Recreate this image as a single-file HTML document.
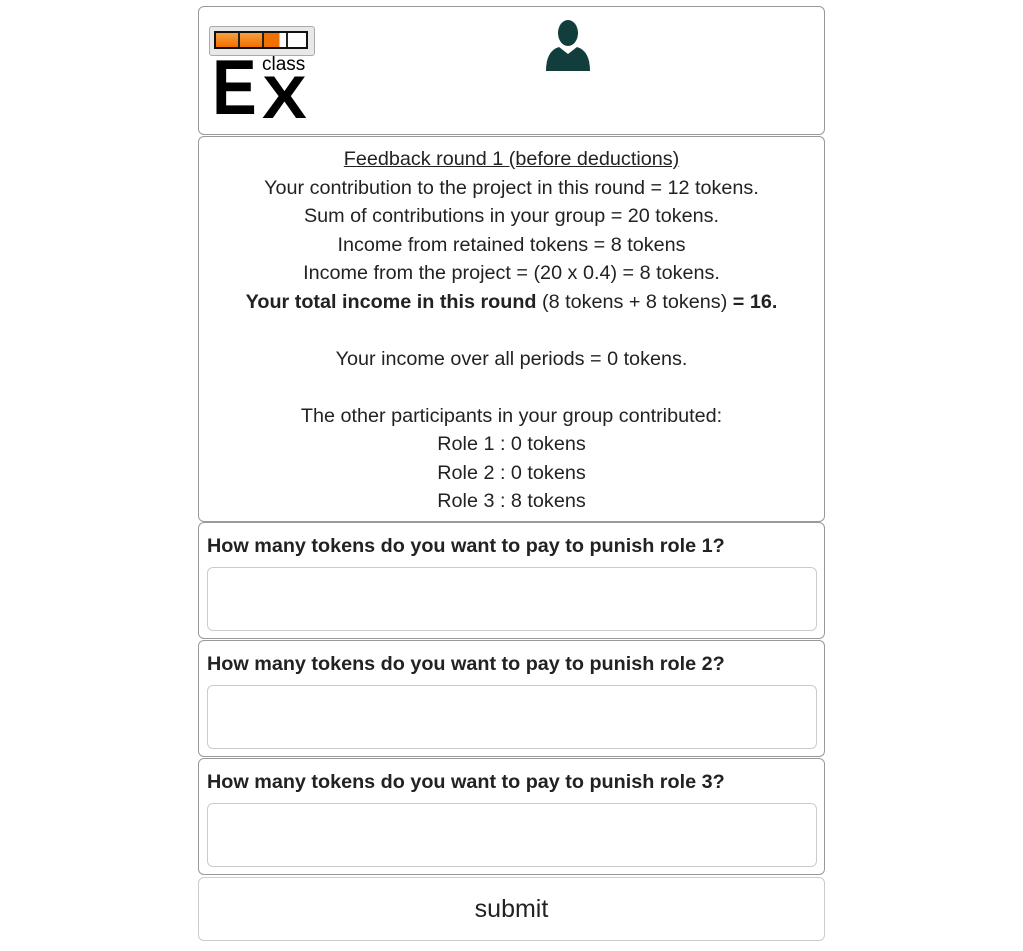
<!DOCTYPE html>
<html><head><style>
body{margin:0;background:#fff;font-family:"Liberation Sans",Arial,sans-serif;color:#222;}
.box{position:absolute;left:198px;width:625px;border:1px solid #999;border-radius:6px;background:#fff;box-sizing:content-box}
.fb{text-align:center;font-size:19.8px;line-height:28.5px;}
.q{font-weight:bold;font-size:19.8px;padding:12px 0 0 8px;line-height:22px}
.in{position:absolute;left:8px;width:608px;height:62px;border:1px solid #ccc;border-radius:6px}
.L{position:absolute;font-weight:bold;color:#000;transform-origin:0 0}
</style></head><body>
<div class="box" style="top:6px;height:127px">
  <div style="position:absolute;left:10px;top:19px;width:104px;height:28px;border:1px solid #aaa;border-radius:3px;background:#e8e8e8"></div>
  <div style="position:absolute;left:15px;top:24px;width:94px;height:18px;border:2px solid #111;box-sizing:border-box;background:#fff;display:flex">
    <div style="width:22px;background:linear-gradient(#f8a040,#f07000);border-right:2px solid #222"></div>
    <div style="width:22px;background:linear-gradient(#f8a040,#f07000);border-right:2px solid #222"></div>
    <div style="width:22px;background:linear-gradient(90deg,#f07000 70%,#fff 70%);border-right:2px solid #222"></div>
  </div>
  <div class="L" style="left:13px;top:41px;font-size:78px;line-height:78px;transform:scaleX(0.86)">E</div>
  <div class="L" style="left:63px;top:61px;font-size:60px;line-height:60px;transform:scaleX(1.12)">X</div>
  <div style="position:absolute;left:63px;top:48px;font-size:19px;line-height:20px;color:#000">class</div>
  <svg style="position:absolute;left:346px;top:10px" width="46" height="56" viewBox="0 0 46 56">
    <ellipse cx="23" cy="16" rx="10" ry="13" fill="#113d3d"/>
    <path d="M1 54 Q1 34 14 30 L23 37 L32 30 Q45 34 45 54 Z" fill="#113d3d"/>
  </svg>
</div>
<div class="box fb" style="top:136px;height:384px">
  <div style="padding-top:8px"><u>Feedback round 1 (before deductions)</u><br>
  Your contribution to the project in this round = 12 tokens.<br>
  Sum of contributions in your group = 20 tokens.<br>
  Income from retained tokens = 8 tokens<br>
  Income from the project = (20 x 0.4) = 8 tokens.<br>
  <b>Your total income in this round</b> (8 tokens + 8 tokens) <b>= 16.</b><br><br>
  Your income over all periods = 0 tokens.<br><br>
  The other participants in your group contributed:<br>
  Role 1 : 0 tokens<br>Role 2 : 0 tokens<br>Role 3 : 8 tokens</div>
</div>
<div class="box" style="top:522px;height:115px"><div class="q">How many tokens do you want to pay to punish role 1?</div><div class="in" style="top:44px"></div></div>
<div class="box" style="top:640px;height:115px"><div class="q">How many tokens do you want to pay to punish role 2?</div><div class="in" style="top:44px"></div></div>
<div class="box" style="top:758px;height:115px"><div class="q">How many tokens do you want to pay to punish role 3?</div><div class="in" style="top:44px"></div></div>
<div class="box" style="top:877px;height:62px;border-color:#ccc;text-align:center;font-size:25px;line-height:62px">submit</div>
</body></html>
